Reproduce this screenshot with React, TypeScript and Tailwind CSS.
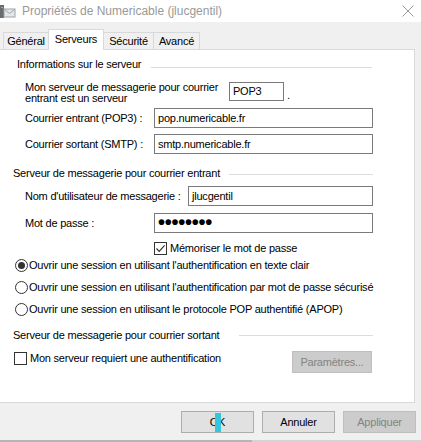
import React from "react";
import clsx from "clsx";

const Field = ({ value, className }: { value: React.ReactNode; className: string }) => (
  <div className={clsx("h-[20px] border border-[#7a7a7a] bg-white flex items-center pl-[3px]", className)}>
    {value}
  </div>
);

const Radio = ({ checked, label }: { checked?: boolean; label: string }) => (
  <div className="flex items-center h-[14px] pl-[15px]">
    <span className="w-[13px] h-[13px] rounded-full border border-[#333333] bg-white flex items-center justify-center">
      {checked && <span className="w-[7px] h-[7px] rounded-full bg-[#333333]" />}
    </span>
    <span className="ml-[1px]">{label}</span>
  </div>
);

const Check = ({ checked }: { checked?: boolean }) => (
  <span className="w-[13px] h-[13px] border border-[#333333] bg-white flex items-center justify-center">
    {checked && (
      <svg width="11" height="11" viewBox="0 0 11 11">
        <path d="M1.5 5.5 L4.2 8.3 L9.6 2.4" fill="none" stroke="#333333" strokeWidth="1.2" />
      </svg>
    )}
  </span>
);

const Button = ({
  label,
  disabled,
  className = "",
  children,
}: {
  label: string;
  disabled?: boolean;
  className?: string;
  children?: React.ReactNode;
}) => (
  <div
    className={clsx(
      "relative h-[22px] flex items-center justify-center border",
      disabled ? "bg-[#cccccc] border-[#bfbfbf] text-[#838383]" : "bg-[#e1e1e1] border-[#adadad] text-black",
      className
    )}
  >
    {label}
    {children}
  </div>
);

export default function App() {
  return (
    <div className="w-[421px] h-[442px] overflow-hidden bg-[#f0f0f0] text-[11px] leading-[13px] tracking-[-0.22px] whitespace-nowrap text-black font-['Liberation_Sans',Arial,sans-serif] flex flex-col">
      {/* Title bar */}
      <div className="h-[22px] bg-white flex items-center shrink-0 tracking-normal">
        <svg width="16" height="16" viewBox="0 0 16 16" className="mb-[1px]">
          <rect x="0" y="2" width="4" height="13" fill="#6b6b6b" />
          <rect x="1" y="4" width="2" height="1" fill="#a9a9a9" />
          <rect x="4" y="6" width="11" height="8" fill="#e6e6e6" stroke="#9aa4ad" strokeWidth="1" />
          <path d="M4.5 6.5 L9.5 10.5 L14.5 6.5" fill="none" stroke="#9aa4ad" strokeWidth="1" />
        </svg>
        <span className="ml-[6px] text-[12px] text-[#999999]">Propriétés de Numericable (jlucgentil)</span>
        <svg width="12" height="12" viewBox="0 0 12 12" className="ml-auto mr-[7px]">
          <path d="M0.5 0.5 L11.5 11.5 M11.5 0.5 L0.5 11.5" stroke="#9a9a9a" strokeWidth="1" />
        </svg>
      </div>

      {/* Tabs */}
      <div className="h-[27px] pl-[3px] flex items-end shrink-0">
        <div className="w-[45px] h-[17px] border-t border-l border-[#d9d9d9] flex items-center justify-center">Général</div>
        <div className="w-[56px] h-[21px] -mb-[1px] border-t border-l border-r border-[#d9d9d9] bg-white flex items-start justify-center pt-[3px] relative z-10">
          Serveurs
        </div>
        <div className="w-[49px] h-[17px] border-t border-[#d9d9d9] flex items-center justify-center">Sécurité</div>
        <div className="w-[47px] h-[17px] border-t border-l border-r border-[#d9d9d9] flex items-center justify-center">Avancé</div>
      </div>

      {/* Panel */}
      <div className="w-[415px] h-[354px] shrink-0 bg-white border-t border-r border-b border-[#d9d9d9] flex flex-col pt-[7px]">
        <div className="h-[14px] flex items-start pl-[17px]">
          <span className="w-[134px] leading-[14px]">Informations sur le serveur</span>
          <span className="w-[221px] h-px mt-[10px] bg-[#dcdcdc]" />
        </div>

        <div className="h-[22px] mt-[11px] flex items-start pl-[25px]">
          <span className="w-[204px] leading-[11px]">
            Mon serveur de messagerie pour courrier
            <br />
            entrant est un serveur
          </span>
          <div className="w-[55px] h-[19px] border border-[#7a7a7a] flex items-center pl-[3px]">POP3</div>
          <span className="ml-[3px] mt-[7px]">.</span>
        </div>

        <div className="h-[20px] mt-[4px] flex items-center pl-[25px]">
          <span className="w-[129px]">Courrier entrant (POP3) :</span>
          <Field value="pop.numericable.fr" className="w-[219px]" />
        </div>

        <div className="h-[20px] mt-[6px] flex items-center pl-[25px]">
          <span className="w-[129px]">Courrier sortant (SMTP) :</span>
          <Field value="smtp.numericable.fr" className="w-[219px]" />
        </div>

        <div className="h-[14px] mt-[12px] flex items-start pl-[13px]">
          <span className="w-[216px] leading-[14px]">Serveur de messagerie pour courrier entrant</span>
          <span className="w-[144px] h-px mt-[8px] bg-[#dcdcdc]" />
        </div>

        <div className="h-[20px] mt-[6px] flex items-center pl-[25px]">
          <span className="w-[163px]">Nom d'utilisateur de messagerie :</span>
          <Field value="jlucgentil" className="w-[185px]" />
        </div>

        <div className="h-[20px] mt-[7px] flex items-center pl-[25px]">
          <span className="w-[129px]">Mot de passe :</span>
          <Field
            value={<span className="text-[20px] leading-none font-bold tracking-[-0.25px] -mt-[2px]">••••••••</span>}
            className="w-[219px]"
          />
        </div>

        <div className="h-[13px] mt-[9px] flex items-center pl-[154px]">
          <Check checked />
          <span className="ml-[3px]">Mémoriser le mot de passe</span>
        </div>

        <div className="mt-[3px]">
          <Radio checked label="Ouvrir une session en utilisant l'authentification en texte clair" />
        </div>
        <div className="mt-[8px]">
          <Radio label="Ouvrir une session en utilisant l'authentification par mot de passe sécurisé" />
        </div>
        <div className="mt-[8px]">
          <Radio label="Ouvrir une session en utilisant le protocole POP authentifié (APOP)" />
        </div>

        <div className="h-[14px] mt-[12px] flex items-start pl-[13px]">
          <span className="w-[226px] leading-[14px]">Serveur de messagerie pour courrier sortant</span>
          <span className="w-[134px] h-px mt-[7px] bg-[#dcdcdc]" />
        </div>

        <div className="h-[22px] mt-[9px] flex items-start pl-[14px]">
          <div className="h-[13px] mt-[1px] flex items-center">
            <Check />
            <span className="ml-[3px]">Mon serveur requiert une authentification</span>
          </div>
          <Button label="Paramètres..." disabled className="ml-auto mr-[42px] w-[80px]" />
        </div>
      </div>

      {/* Buttons */}
      <div className="mt-[8px] flex justify-end gap-[8px] pr-[5px] shrink-0">
        <Button label="OK" className="w-[73px]">
          <span className="absolute left-[33px] top-[1px] w-[6px] h-[19px] bg-[#33c6dc]" />
        </Button>
        <Button label="Annuler" className="w-[73px]" />
        <Button label="Appliquer" disabled className="w-[73px]" />
      </div>

      <div className="mt-auto h-[2px] flex shrink-0">
        <span className="w-[252px] bg-[#b5b5b5]" />
        <span className="flex-1 bg-[#d4d4d4]" />
      </div>
    </div>
  );
}
